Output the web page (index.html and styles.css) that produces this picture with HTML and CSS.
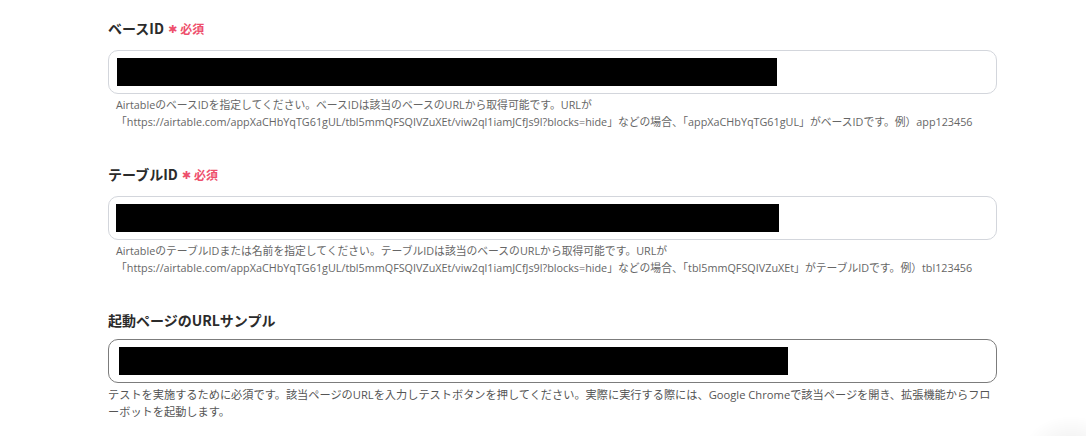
FILE: index.html
```html
<!DOCTYPE html>
<html lang="ja">

<head>
    <meta charset="UTF-8">
    <meta name="viewport" content="width=device-width, initial-scale=1.0">
    <title>Airtable 設定</title>
    <link rel="stylesheet" href="styles.css">
</head>

<body>

    <div class="form">
        <div class="field">
            <div class="label">ベースID<span class="req"><span class="star">✱</span>必須</span></div>
            <div class="input"><span class="mask" style="width: 660px"></span></div>
            <p class="help">AirtableのベースIDを指定してください。ベースIDは該当のベースのURLから取得可能です。URLが「https://airtable.com/appXaCHbYqTG61gUL/tbl5mmQFSQIVZuXEt/viw2ql1iamJCfJs9l?blocks=hide」などの場合、「appXaCHbYqTG61gUL」がベースIDです。例）app123456</p>
        </div>

        <div class="field">
            <div class="label">テーブルID<span class="req"><span class="star">✱</span>必須</span></div>
            <div class="input"><span class="mask" style="width: 663px; margin-left: -1px"></span></div>
            <p class="help">AirtableのテーブルIDまたは名前を指定してください。テーブルIDは該当のベースのURLから取得可能です。URLが「https://airtable.com/appXaCHbYqTG61gUL/tbl5mmQFSQIVZuXEt/viw2ql1iamJCfJs9l?blocks=hide」などの場合、「tbl5mmQFSQIVZuXEt」がテーブルIDです。例）tbl123456</p>
        </div>

        <div class="field">
            <div class="label label-plain">起動ページのURLサンプル</div>
            <div class="input input-active"><span class="mask" style="width: 669px; margin-left: 2px"></span></div>
            <p class="help help-wide">テストを実施するために必須です。該当ページのURLを入力しテストボタンを押してください。実際に実行する際には、Google Chromeで該当ページを開き、拡張機能からフローボットを起動します。</p>
        </div>
    </div>

    <div class="corner"></div>

</body>

</html>
```

FILE: styles.css
```css
body {
    margin: 0;
    background-color: #fff;
    font-family: "Open Sans", "Noto Sans CJK JP", sans-serif;
    color: #333;
}

.form {
    width: 889px;
    padding: 18px 0 0 108px;
}

.field {
    margin-bottom: 34px;
}

.label {
    display: flex;
    align-items: center;
    height: 20px;
    margin-bottom: 12px;
    font-size: 14px;
    font-weight: bold;
    color: #2b2b2b;
    font-family: "Noto Sans CJK JP", sans-serif;
}

.label-plain {
    margin-bottom: 9px;
}

.req {
    display: flex;
    align-items: center;
    margin-left: 4px;
    font-size: 12px;
    color: #ee4f6c;
}

.star {
    font-family: "DejaVu Sans", sans-serif;
    font-size: 11px;
    margin-right: 3px;
    position: relative;
    top: 1px;
}

.input {
    display: flex;
    align-items: center;
    height: 44px;
    padding: 0 8px;
    border: 1px solid #d3d6dc;
    border-radius: 10px;
    box-sizing: border-box;
}

.input-active {
    border-color: #7c7c7c;
}

.mask {
    display: block;
    height: 28px;
    background-color: #000;
}

.help {
    margin: 2px 0 0;
    padding: 0 8px;
    font-size: 10.8px;
    line-height: 17px;
    color: #666;
}

.help-wide {
    margin-top: 3px;
    padding: 0;
    font-size: 11.2px;
    color: #555;
}

.corner {
    position: fixed;
    right: -30px;
    bottom: -40px;
    width: 90px;
    height: 60px;
    border-radius: 50%;
    background: radial-gradient(closest-side, rgba(0, 0, 0, 0.06), rgba(0, 0, 0, 0));
}
```
